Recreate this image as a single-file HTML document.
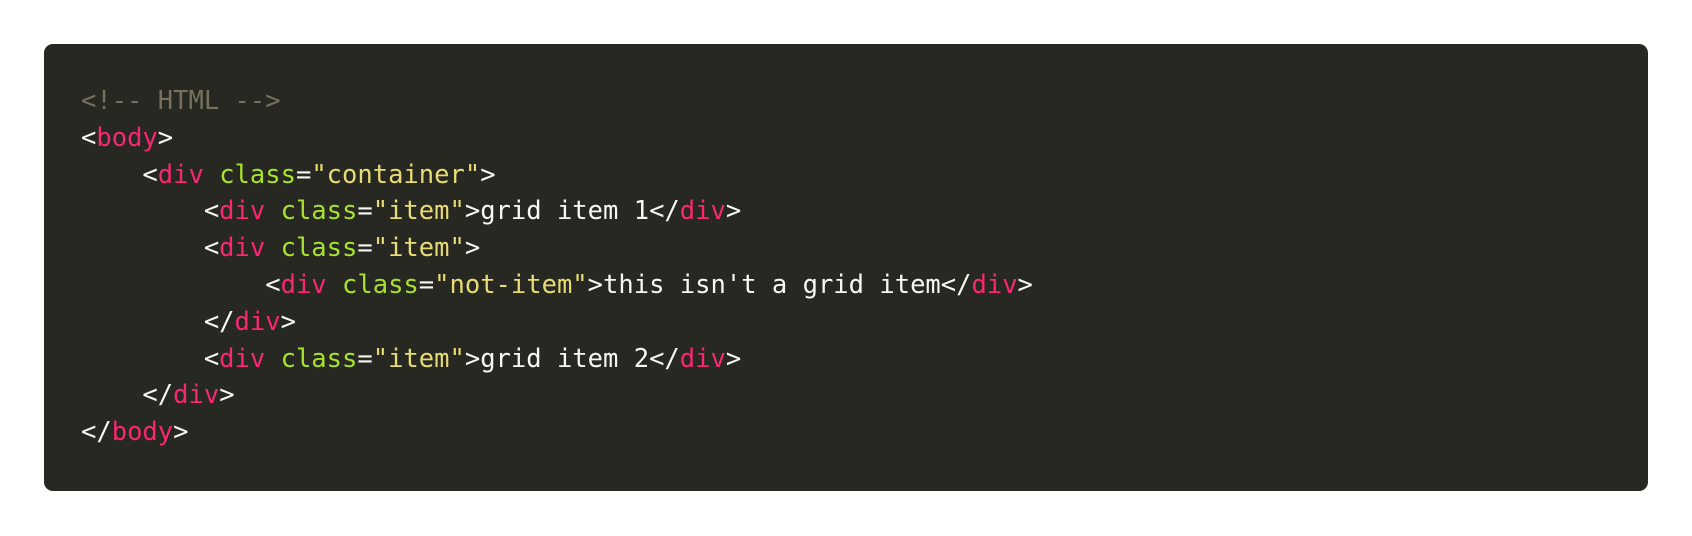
<!DOCTYPE html>
<html><head><style>
html,body{margin:0;padding:0;background:#fff;width:1692px;height:536px;overflow:hidden}
.box{position:absolute;left:44px;top:44px;width:1604px;height:447px;background:#272822;border-radius:9px}
pre{margin:0;position:absolute;left:81px;top:83px;font-family:"DejaVu Sans Mono","Liberation Mono",monospace;font-size:25.5px;line-height:36.8px;color:#f8f8f2}
.c{color:#75715e}.t{color:#f92672}.a{color:#a6e22e}.s{color:#e6db74}
</style></head><body><div class="box"></div>
<pre><span class="c">&lt;!-- HTML --&gt;</span>
&lt;<span class="t">body</span>&gt;
    &lt;<span class="t">div</span> <span class="a">class</span>=<span class="s">"container"</span>&gt;
        &lt;<span class="t">div</span> <span class="a">class</span>=<span class="s">"item"</span>&gt;grid item 1&lt;/<span class="t">div</span>&gt;
        &lt;<span class="t">div</span> <span class="a">class</span>=<span class="s">"item"</span>&gt;
            &lt;<span class="t">div</span> <span class="a">class</span>=<span class="s">"not-item"</span>&gt;this isn't a grid item&lt;/<span class="t">div</span>&gt;
        &lt;/<span class="t">div</span>&gt;
        &lt;<span class="t">div</span> <span class="a">class</span>=<span class="s">"item"</span>&gt;grid item 2&lt;/<span class="t">div</span>&gt;
    &lt;/<span class="t">div</span>&gt;
&lt;/<span class="t">body</span>&gt;</pre>
</body></html>
